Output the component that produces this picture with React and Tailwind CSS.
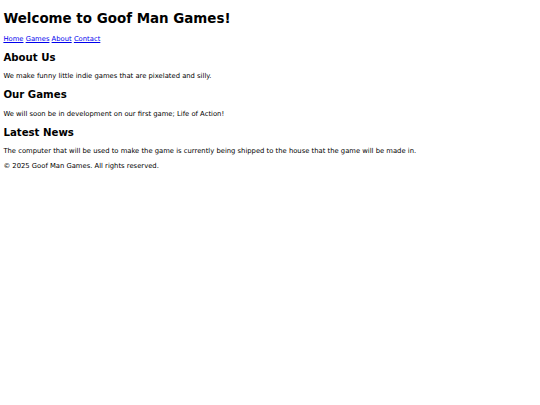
const linkCls = 'text-[#0000ee] underline';

const App = () => {
  return (
    <div className="[zoom:0.425] mx-2 mt-[25px] mb-2 font-['DejaVu_Sans',sans-serif] text-black text-base leading-[normal]">
      <header>
        <h1 className="text-[31.6px] font-bold my-[21.44px]">Welcome to Goof Man Games!</h1>
        <nav>
          <a href="#" className={linkCls}>Home</a>{' '}
          <a href="#" className={linkCls}>Games</a>{' '}
          <a href="#" className={linkCls}>About</a>{' '}
          <a href="#" className={linkCls}>Contact</a>
        </nav>
      </header>

      <section>
        <h2 className="text-2xl font-bold mt-[19.5px] mb-[18.5px]">About Us</h2>
        <p className="my-4">We make funny little indie games that are pixelated and silly.</p>
      </section>

      <section>
        <h2 className="text-2xl font-bold mt-[18.5px] mb-[18.5px]">Our Games</h2>
        <p className="my-4">We will soon be in development on our first game; Life of Action!</p>
      </section>

      <section>
        <h2 className="text-2xl font-bold mt-[18.5px] mb-[18.5px]">Latest News</h2>
        <p className="my-4">The computer that will be used to make the game is currently being shipped to the house that the game will be made in.</p>
      </section>

      <footer>
        <p className="mt-[17px] mb-4">&copy; 2025 Goof Man Games. All rights reserved.</p>
      </footer>
    </div>
  );
};

export default App;
